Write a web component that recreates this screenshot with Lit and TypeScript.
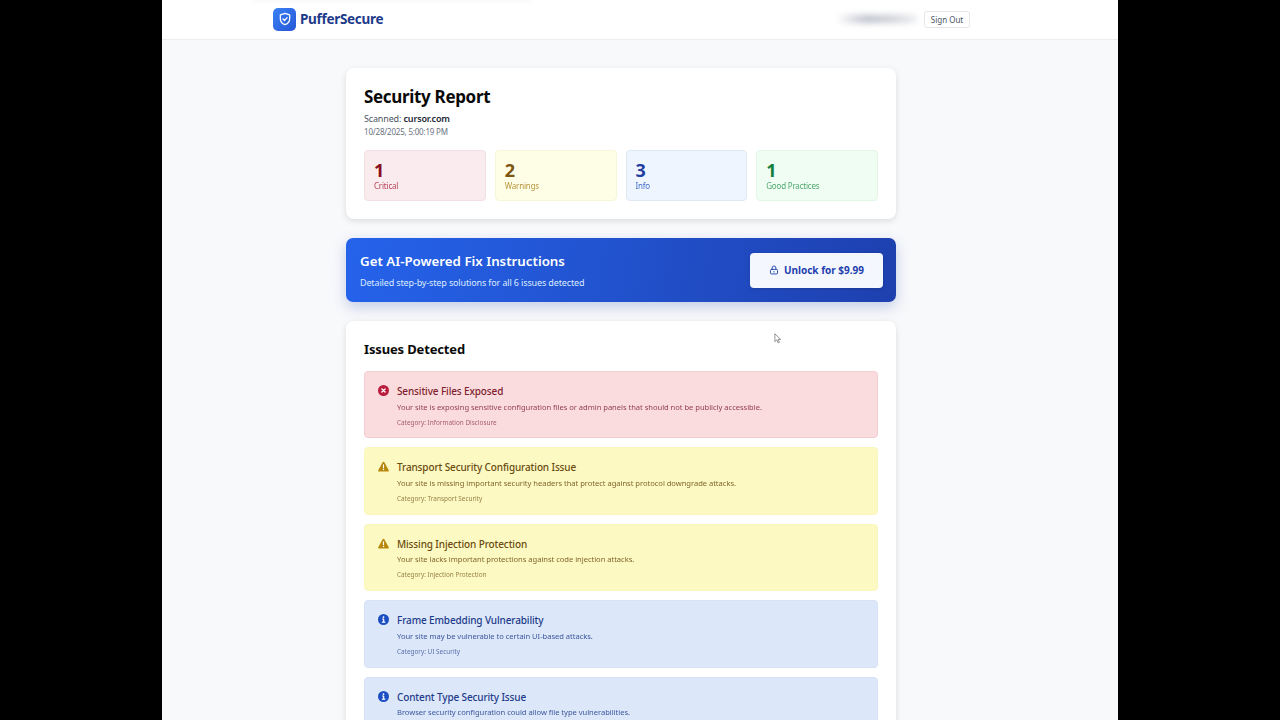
import { LitElement, html, css, svg } from "lit";
import { customElement } from "lit/decorators.js";

type Level = "critical" | "warning" | "info";

interface Issue {
    level: Level;
    title: string;
    desc: string;
    category?: string;
}

const STATS = [
    { value: 1, label: "Critical", cls: "critical" },
    { value: 2, label: "Warnings", cls: "warning" },
    { value: 3, label: "Info", cls: "info" },
    { value: 1, label: "Good Practices", cls: "good" },
];

const ISSUES: Issue[] = [
    {
        level: "critical",
        title: "Sensitive Files Exposed",
        desc: "Your site is exposing sensitive configuration files or admin panels that should not be publicly accessible.",
        category: "Information Disclosure",
    },
    {
        level: "warning",
        title: "Transport Security Configuration Issue",
        desc: "Your site is missing important security headers that protect against protocol downgrade attacks.",
        category: "Transport Security",
    },
    {
        level: "warning",
        title: "Missing Injection Protection",
        desc: "Your site lacks important protections against code injection attacks.",
        category: "Injection Protection",
    },
    {
        level: "info",
        title: "Frame Embedding Vulnerability",
        desc: "Your site may be vulnerable to certain UI-based attacks.",
        category: "UI Security",
    },
    {
        level: "info",
        title: "Content Type Security Issue",
        desc: "Browser security configuration could allow file type vulnerabilities.",
    },
];

const ICONS = {
    critical: svg`<circle cx="12" cy="12" r="12" fill="currentColor"/><path d="M8.500 8.500l7 7M15.500 8.500l-7 7" stroke="#fff" stroke-width="3" stroke-linecap="round"/>`,
    warning: svg`<path d="M12 1.500c.8 0 1.500.4 1.900 1.100l9.500 17.400c.8 1.400-.2 3-1.800 3H2.400c-1.600 0-2.600-1.600-1.800-3L10.100 2.600c.4-.7 1.100-1.100 1.900-1.100z" fill="currentColor"/><path d="M12 8.500v6" stroke="#fff" stroke-width="2.600" stroke-linecap="round"/><circle cx="12" cy="18.600" r="1.600" fill="#fff"/>`,
    info: svg`<circle cx="12" cy="12" r="12" fill="currentColor"/><circle cx="12" cy="6.800" r="2" fill="#fff"/><path d="M9.800 11h2.600v6.600M9.500 17.800h5.500" stroke="#fff" stroke-width="2.500" fill="none" stroke-linecap="round" stroke-linejoin="round"/>`,
};

@customElement("app-root")
export class AppRoot extends LitElement {
    private _renderIssue(issue: Issue) {
        return html`
            <div class="issue ${issue.level}">
                <svg class="issue-icon" viewBox="0 0 24 24">${ICONS[issue.level]}</svg>
                <div class="issue-body">
                    <div class="issue-title">${issue.title}</div>
                    <div class="issue-desc">${issue.desc}</div>
                    ${issue.category
                        ? html`<div class="issue-cat">Category: ${issue.category}</div>`
                        : ""}
                </div>
            </div>
        `;
    }

    render() {
        return html`
            <div class="page">
                <header>
                    <div class="smudge"></div>
                    <div class="logo">
                        <svg viewBox="0 0 24 24" fill="none" stroke="#fff" stroke-width="1.900" stroke-linecap="round" stroke-linejoin="round">
                            <path d="M12 3.500l7 2.400v5.600c0 4.400-2.900 7.400-7 9-4.100-1.600-7-4.600-7-9V5.900z" />
                            <path d="M9 12l2.200 2.200L15.200 10" />
                        </svg>
                    </div>
                    <span class="brand">PufferSecure</span>
                    <span class="spacer"></span>
                    <div class="blurred-user"></div>
                    <button class="sign-out">Sign Out</button>
                </header>

                <main>
                    <section class="card report">
                        <h1>Security Report</h1>
                        <div class="scanned">Scanned: <strong>cursor.com</strong></div>
                        <div class="date">10/28/2025, 5:00:19 PM</div>
                        <div class="stats">
                            ${STATS.map(
                                (s) => html`
                                    <div class="stat ${s.cls}">
                                        <div class="stat-value">${s.value}</div>
                                        <div class="stat-label">${s.label}</div>
                                    </div>
                                `,
                            )}
                        </div>
                    </section>

                    <section class="banner">
                        <div>
                            <div class="banner-title">Get AI-Powered Fix Instructions</div>
                            <div class="banner-sub">Detailed step-by-step solutions for all 6 issues detected</div>
                        </div>
                        <button class="unlock">
                            <svg viewBox="0 0 24 24" fill="none" stroke="currentColor" stroke-width="2.200" stroke-linecap="round" stroke-linejoin="round">
                                <rect x="3.500" y="10.500" width="17" height="11" rx="2.500" />
                                <path d="M7.500 10.500V7a4.500 4.500 0 0 1 9 0v3.500" />
                                <path d="M12 15.500v1.500" />
                            </svg>
                            Unlock for $9.99
                        </button>
                    </section>

                    <section class="card issues">
                        <h2>Issues Detected</h2>
                        <div class="issue-list">
                            ${ISSUES.map((i) => this._renderIssue(i))}
                        </div>
                    </section>
                </main>

                <svg class="cursor" viewBox="0 0 10 14">
                    <path d="M1 1v10l2.500-2.200L5.200 12.600l1.600-.7L5.100 8.200H8.400z" fill="#fff" stroke="#555" stroke-width="0.800" stroke-linejoin="round" />
                </svg>
            </div>
        `;
    }

    static styles = css`
        :host {
            display: block;
            height: 720px;
            background: #000;
            overflow: hidden;
            font-family: "Noto Sans", "Open Sans", sans-serif;
        }
        .page {
            position: relative;
            width: 956px;
            height: 720px;
            margin: 0 auto;
            background: #f8f9fb;
            overflow: hidden;
        }
        header {
            position: relative;
            display: flex;
            align-items: center;
            box-sizing: border-box;
            height: 40px;
            padding: 0 148px 1px 111px;
            background: #fff;
            border-bottom: 1px solid #eceef2;
        }
        .smudge {
            position: absolute;
            left: 90px;
            top: -5px;
            width: 280px;
            height: 4px;
            background: #eeeef0;
            filter: blur(3px);
        }
        .logo {
            display: flex;
            align-items: center;
            justify-content: center;
            width: 23px;
            height: 23px;
            border-radius: 5px;
            background: linear-gradient(135deg, #3b82f6, #2456d6);
        }
        .logo svg {
            width: 16px;
            height: 16px;
        }
        .brand {
            margin-left: 4px;
            font-size: 13.500px;
            letter-spacing: -0.3px;
            font-weight: 700;
            color: #1e3a8a;
        }
        .spacer {
            flex: 1;
        }
        .blurred-user {
            width: 78px;
            height: 6px;
            margin-right: 7px;
            border-radius: 3px;
            background: linear-gradient(90deg, #f4f4f6, #a8acba 35%, #c0c3cc 70%, #e8e9ed);
            filter: blur(3.500px);
        }
        .sign-out {
            box-sizing: border-box;
            width: 46px;
            height: 17px;
            padding: 0;
            border: 1px solid #e5e7eb;
            border-radius: 3px;
            background: #fff;
            color: #4b5563;
            font-family: inherit;
            font-size: 8px;
        }
        main {
            display: flex;
            flex-direction: column;
            gap: 19px;
            width: 550px;
            margin: 28px 0 0 184px;
        }
        .card {
            box-sizing: border-box;
            padding: 18px;
            border-radius: 8px;
            background: #fff;
            box-shadow: 0 2px 6px rgba(0, 0, 0, 0.12);
        }
        h1 {
            margin: 0;
            font-size: 17px;
            letter-spacing: -0.33px;
            line-height: 22px;
            font-weight: 700;
            color: #0a0a0a;
        }
        .scanned {
            margin-top: 4px;
            font-size: 9px;
            letter-spacing: -0.15px;
            line-height: 13px;
            color: #4b5563;
        }
        .scanned strong {
            font-weight: 600;
            color: #1f2937;
        }
        .date {
            font-size: 8px;
            letter-spacing: -0.2px;
            line-height: 13px;
            color: #6b7280;
        }
        .stats {
            display: grid;
            grid-template-columns: repeat(4, 1fr);
            gap: 9px;
            margin-top: 12px;
        }
        .stat {
            box-sizing: border-box;
            height: 51px;
            padding: 8px 9px 0;
            border: 1px solid;
            border-radius: 4px;
        }
        .stat-value {
            font-size: 18px;
            line-height: 22px;
            font-weight: 700;
        }
        .stat-label {
            font-size: 8px;
            letter-spacing: -0.2px;
            line-height: 10px;
            opacity: 0.9;
        }
        .stat.critical {
            background: #faecee;
            border-color: #f3dfe2;
            color: #880e20;
        }
        .stat.critical .stat-label {
            color: #b0304a;
        }
        .stat.warning {
            background: #fefde6;
            border-color: #f8f6d8;
            color: #7c5510;
        }
        .stat.warning .stat-label {
            color: #b08a2c;
        }
        .stat.info {
            background: #eff5fe;
            border-color: #dfe8f5;
            color: #1e3fa0;
        }
        .stat.info .stat-label {
            color: #2f5fc0;
        }
        .stat.good {
            background: #effdf2;
            border-color: #e2f6e8;
            color: #15803d;
        }
        .stat.good .stat-label {
            color: #3f9d62;
        }
        .banner {
            display: flex;
            align-items: center;
            justify-content: space-between;
            box-sizing: border-box;
            height: 64px;
            padding: 0 13px 0 14px;
            border-radius: 7px;
            background: linear-gradient(100deg, #2563eb, #1e40af);
            box-shadow: 0 5px 14px rgba(37, 70, 170, 0.25);
            color: #fff;
        }
        .banner-title {
            font-size: 13.300px;
            line-height: 18px;
            font-weight: 600;
        }
        .banner-sub {
            margin-top: 6px;
            font-size: 9px;
            letter-spacing: -0.14px;
            line-height: 13px;
            color: #dbeafe;
        }
        .unlock {
            display: flex;
            align-items: center;
            justify-content: center;
            gap: 5px;
            width: 133px;
            height: 35px;
            padding: 0;
            border: none;
            border-radius: 4px;
            background: #f4f7fd;
            box-shadow: 0 1px 3px rgba(0, 0, 0, 0.15);
            color: #1e40af;
            font-family: inherit;
            font-size: 10px;
            font-weight: 700;
        }
        .unlock svg {
            width: 10px;
            height: 10px;
        }
        h2 {
            margin: 0 0 12px;
            font-size: 13px;
            letter-spacing: -0.15px;
            line-height: 20px;
            font-weight: 700;
            color: #0a0a0a;
        }
        .issue-list {
            display: flex;
            flex-direction: column;
            gap: 9px;
        }
        .issue {
            display: flex;
            gap: 8px;
            box-sizing: border-box;
            height: 67.400px;
            padding: 12px 13px 0;
            border: 1px solid;
            border-radius: 4px;
        }
        .issue-icon {
            flex: none;
            width: 11px;
            height: 11px;
            margin-top: 1px;
        }
        .issue-title {
            font-size: 10px;
            letter-spacing: -0.13px;
            line-height: 14px;
            font-weight: 500;
        }
        .issue-desc {
            margin-top: 3.500px;
            font-size: 7.600px;
            letter-spacing: -0.04px;
            line-height: 11px;
            opacity: 0.85;
        }
        .issue-cat {
            margin-top: 5px;
            font-size: 6.400px;
            line-height: 9px;
            opacity: 0.7;
        }
        .issue.critical {
            background: #fadcdf;
            border-color: #f4cdd1;
            color: #7f1d2d;
        }
        .issue.critical .issue-icon {
            color: #b91c3c;
        }
        .issue.warning {
            background: #fcfac2;
            border-color: #f9f6be;
            color: #6b4a10;
        }
        .issue.warning .issue-icon {
            color: #b7860b;
        }
        .issue.info {
            background: #dce8f9;
            border-color: #d6e2f5;
            color: #1e3a8a;
        }
        .issue.info .issue-icon {
            color: #1d4fc4;
        }
        .cursor {
            position: absolute;
            left: 612px;
            top: 333px;
            width: 8px;
            height: 11px;
        }
    `;
}
